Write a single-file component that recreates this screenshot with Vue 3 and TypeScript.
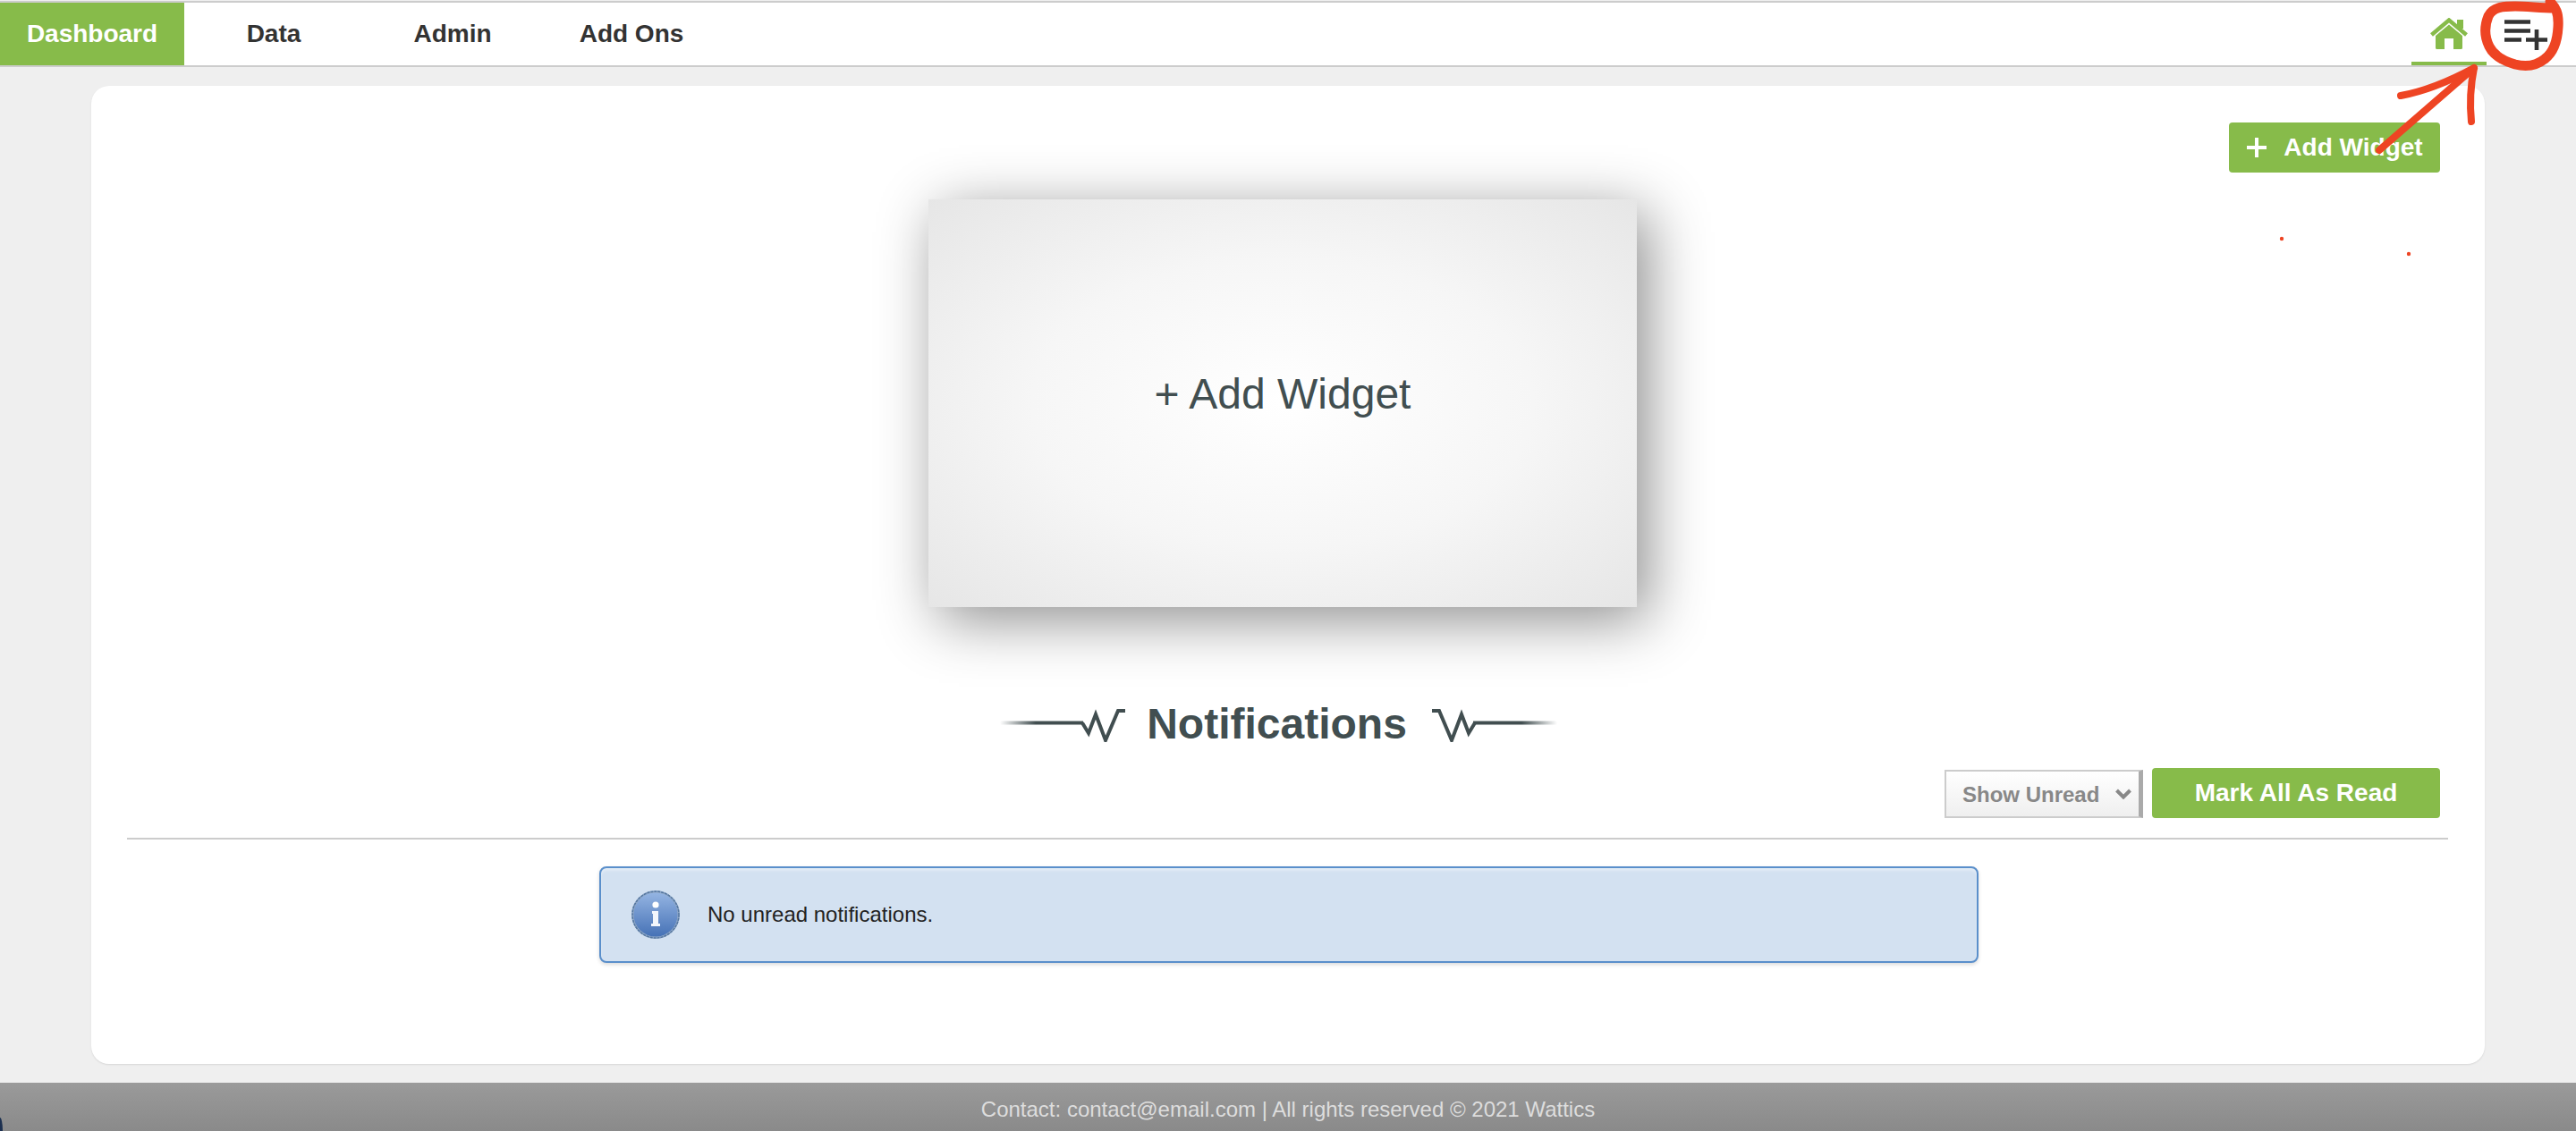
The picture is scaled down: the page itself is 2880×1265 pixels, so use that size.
<script setup lang="ts">
const navItems = ['Dashboard', 'Data', 'Admin', 'Add Ons']
const activeItem = 'Dashboard'
</script>

<template>
  <div class="page">
    <header class="nav">
      <nav class="nav-items">
        <a v-for="item in navItems" :key="item" class="nav-item" :class="{ active: item === activeItem }">{{ item }}</a>
      </nav>
      <div class="nav-tools">
        <a class="home-tab">
          <svg width="42" height="36" viewBox="0 0 42 36">
            <rect x="30" y="2" width="7" height="10" fill="#87bb4a" />
            <path d="M1.5 19 L21 2.5 L40.5 19" fill="none" stroke="#87bb4a" stroke-width="4.5" />
            <path d="M6 20 L21 7.5 L36 20 V33.5 Q36 35 34.5 35 H26 V23 H16 V35 H7.5 Q6 35 6 33.5 Z" fill="#87bb4a" />
          </svg>
        </a>
        <a class="add-tab">
          <svg width="48" height="36" viewBox="0 0 48 36">
            <path d="M0 3.5 H29 M0 13.5 H29 M0 23.5 H19 M24 23.5 H48 M36 12 V35" fill="none" stroke="#333" stroke-width="4.6" />
          </svg>
        </a>
      </div>
    </header>

    <main class="card">
      <div class="card-top">
        <button class="btn add-btn">
          <svg width="24" height="24" viewBox="0 0 24 24">
            <path d="M12 1 V23 M1 12 H23" stroke="#fff" stroke-width="4" />
          </svg>
          Add Widget
        </button>
      </div>

      <div class="widget">+ Add Widget</div>

      <div class="title-row">
        <svg class="ornament" width="140" height="40" viewBox="0 0 140 40">
          <defs>
            <linearGradient id="fadeLeft" gradientUnits="userSpaceOnUse" x1="0" y1="0" x2="40" y2="0">
              <stop offset="0" stop-color="#414e50" stop-opacity="0" />
              <stop offset="1" stop-color="#414e50" />
            </linearGradient>
          </defs>
          <path d="M0 18.5 H93" fill="none" stroke="url(#fadeLeft)" stroke-width="4" />
          <path d="M92 18.5 L99 30 L107 9 L118 38 L132 5 H140" fill="none" stroke="#414e50" stroke-width="4" />
        </svg>
        <h2 class="title">Notifications</h2>
        <svg class="ornament" width="140" height="40" viewBox="0 0 140 40">
          <defs>
            <linearGradient id="fadeRight" gradientUnits="userSpaceOnUse" x1="100" y1="0" x2="140" y2="0">
              <stop offset="0" stop-color="#414e50" />
              <stop offset="1" stop-color="#414e50" stop-opacity="0" />
            </linearGradient>
          </defs>
          <path d="M46 18.5 H140" fill="none" stroke="url(#fadeRight)" stroke-width="4" />
          <path d="M0 5 H8 L22 38 L33 9 L41 30 L48 18.5" fill="none" stroke="#414e50" stroke-width="4" />
        </svg>
      </div>

      <div class="controls">
        <div class="select-wrap">
          <select class="filter">
            <option>Show Unread</option>
            <option>Show All</option>
          </select>
          <svg class="chevron" width="18" height="12" viewBox="0 0 18 12">
            <path d="M1.5 2 L9 9.5 L16.5 2" fill="none" stroke="#888" stroke-width="4" />
          </svg>
        </div>
        <button class="btn mark-btn">Mark All As Read</button>
      </div>

      <hr class="divider" />

      <div class="alert">
        <svg class="info" width="56" height="56" viewBox="0 0 56 56">
          <defs>
            <linearGradient id="infoFill" x1="0" y1="0" x2="0" y2="1">
              <stop offset="0" stop-color="#94b4e2" />
              <stop offset="1" stop-color="#4672b6" />
            </linearGradient>
          </defs>
          <circle cx="28" cy="28" r="27" fill="#8fa8c8" />
          <circle cx="28" cy="28" r="24.5" fill="url(#infoFill)" />
          <circle cx="28" cy="28" r="26" fill="none" stroke="#54769f" stroke-width="1.5" stroke-dasharray="3 1" />
          <circle cx="28" cy="17" r="3.6" fill="#fff" />
          <path d="M24 24 H31 V38 H33 V41 H23 V38 H25 V27 H24 Z" fill="#f2f6fc" />
        </svg>
        <span class="alert-text">No unread notifications.</span>
      </div>
    </main>

    <footer class="footer">Contact: contact@email.com | All rights reserved © 2021 Wattics</footer>

    <!-- red pen marks drawn on top of the screenshot -->
    <svg class="markup" width="2880" height="1265" viewBox="0 0 2880 1265">
      <g fill="none" stroke="#ee4423" stroke-linecap="round" stroke-linejoin="round">
        <path stroke-width="11" d="M2851 2 C2857 8 2861 14 2860 30 C2859 50 2853 60 2845 66 C2835 74 2824 75 2812 72 C2798 68 2788 62 2783 52 C2777 40 2778 28 2782 18 C2787 8 2798 7 2812 7 C2826 7 2840 9 2856 9" />
        <path stroke-width="8" d="M2660 168 L2766 76" />
        <path stroke-width="8" d="M2684 107 C2712 102 2740 90 2766 76 C2762 96 2761 116 2763 136" />
      </g>
      <circle cx="2551" cy="267" r="2.2" fill="#ee4423" />
      <circle cx="2693" cy="284" r="2.2" fill="#ee4423" />
    </svg>
  </div>
</template>

<style>
html,
body {
  margin: 0;
  background: #eee;
}
</style>

<style scoped>
.page {
  position: relative;
  display: flex;
  flex-direction: column;
  height: 1265px;
  overflow: hidden;
  background: #efefef;
  font-family: "Liberation Sans", Arial, sans-serif;
}

.nav {
  display: flex;
  justify-content: space-between;
  height: 74px;
  box-sizing: border-box;
  margin-top: 1px;
  background: #fff;
  border-top: 2px solid #ccc;
  border-bottom: 2px solid #ccc;
}

.nav-items {
  display: flex;
}

.nav-item {
  display: flex;
  align-items: center;
  justify-content: center;
  width: 200px;
  font-size: 28px;
  font-weight: 700;
  color: #333;
}

.nav-item.active {
  width: 206px;
  background: #87bb4a;
  color: #fff;
}

.nav-tools {
  display: flex;
  margin-right: 32px;
}

.home-tab {
  display: flex;
  justify-content: center;
  width: 84px;
  box-sizing: border-box;
  padding-top: 17px;
  border-bottom: 4px solid #87bb4a;
}

.add-tab {
  margin-left: 20px;
  padding-top: 18px;
}

.card {
  flex: 1;
  margin: 21px 102px;
  background: #fff;
  border-radius: 20px;
  box-shadow: 0 1px 2px rgba(0, 0, 0, 0.1);
}

.card-top {
  display: flex;
  justify-content: flex-end;
  padding: 41px 50px 0 0;
}

.btn {
  display: flex;
  align-items: center;
  justify-content: center;
  height: 56px;
  padding: 0;
  border: 0;
  border-radius: 4px;
  background: #87bb4a;
  color: #fff;
  font-family: inherit;
  font-weight: 700;
}

.add-btn {
  gap: 18px;
  width: 236px;
  font-size: 28px;
}

.widget {
  display: flex;
  align-items: center;
  justify-content: center;
  width: 792px;
  height: 456px;
  box-sizing: border-box;
  margin: 30px 0 0 936px;
  padding-bottom: 22px;
  background: radial-gradient(ellipse at center, #fff 0%, #f6f6f6 50%, #e6e6e6 100%);
  box-shadow: 12px 14px 62px rgba(0, 0, 0, 0.45);
  color: #414e50;
  font-size: 48px;
}

.title-row {
  display: flex;
  align-items: center;
  justify-content: center;
  gap: 26px;
  margin-top: 103px;
  padding-right: 21px;
}

.title {
  margin: 0 2px 0 -2px;
  color: #414e50;
  font-size: 48px;
  line-height: 56px;
  font-weight: 700;
}

.controls {
  display: flex;
  justify-content: flex-end;
  align-items: flex-end;
  gap: 10px;
  margin-top: 21px;
  padding-right: 50px;
}

.select-wrap {
  position: relative;
}

.filter {
  display: block;
  width: 222px;
  height: 54px;
  box-sizing: border-box;
  padding: 0 0 0 18px;
  appearance: none;
  border: 2px solid #ccc;
  border-right: 5px solid #aaa;
  border-radius: 0;
  background: linear-gradient(#fff, #efefef);
  color: #888;
  font-family: inherit;
  font-size: 24px;
  font-weight: 700;
}

.chevron {
  position: absolute;
  top: 21px;
  right: 13px;
}

.mark-btn {
  width: 322px;
  font-size: 28px;
}

.divider {
  height: 2px;
  margin: 22px 41px 0 40px;
  border: 0;
  background: #ccc;
}

.alert {
  display: flex;
  align-items: center;
  gap: 30px;
  width: 1542px;
  height: 108px;
  box-sizing: border-box;
  margin: 30px 0 0 568px;
  padding-left: 33px;
  border: 2px solid #5a8fcb;
  border-radius: 8px;
  background: #d3e1f1;
  box-shadow: inset 0 3px 3px rgba(255, 255, 255, 0.35), 0 2px 4px rgba(0, 0, 0, 0.15);
}

.alert-text {
  color: #222;
  font-size: 24px;
}

.footer {
  position: relative;
  height: 54px;
  line-height: 60px;
  text-align: center;
  background: linear-gradient(#9a9a9a, #8a8a8a);
  color: #ddd;
  font-size: 24px;
}

.footer::before {
  content: "";
  position: absolute;
  left: 0;
  bottom: 0;
  width: 3px;
  height: 15px;
  background: #1c3050;
  border-top-right-radius: 3px 15px;
}

.markup {
  position: absolute;
  inset: 0;
  pointer-events: none;
}
</style>
